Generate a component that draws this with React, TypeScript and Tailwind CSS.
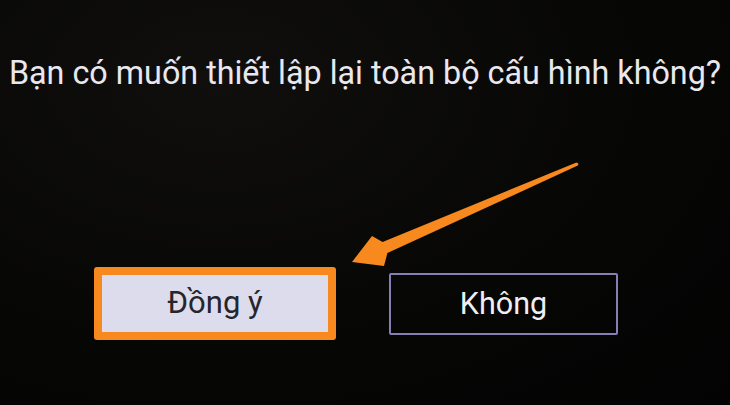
const ORANGE = '#f7891f';

const Arrow = () => (
  <svg
    className="pointer-events-none absolute left-0 top-0"
    width="730"
    height="405"
    viewBox="0 0 730 405"
  >
    <path
      d="M576.4 162.4 L382.6 242.1 L372 236 L352 262 L384 266 L387.4 253.1 L577.8 165.6 Q579.5 163.4 576.4 162.4 Z"
      fill={ORANGE}
    />
  </svg>
);

export default function App() {
  return (
    <div
      className="relative h-[405px] w-[730px] overflow-hidden bg-[radial-gradient(ellipse_at_30%_20%,#100f0e_0%,#060605_60%,#030303_100%)]"
      style={{ fontFamily: 'Roboto, "Noto Sans", sans-serif' }}
    >
      <div className="pt-[55px] text-center text-[32.3px] leading-[36px] text-[#e9e8ee]">
        Bạn có muốn thiết lập lại toàn bộ cấu hình không?
      </div>

      <div className="mt-[176px] flex items-center pl-[94px]">
        <div className="rounded-[3px] bg-[#f7891f] p-[8px]">
          <button
            type="button"
            className="flex h-[57px] w-[226px] items-center justify-center bg-[#dddcec] text-[31px] text-[#26252b]"
          >
            Đồng ý
          </button>
        </div>
        <button
          type="button"
          className="ml-[53px] flex h-[62px] w-[229px] items-center justify-center rounded-[2px] border-2 border-[#857fb3] text-[30.5px] text-[#efeef3]"
        >
          Không
        </button>
      </div>

      <Arrow />
    </div>
  );
}
